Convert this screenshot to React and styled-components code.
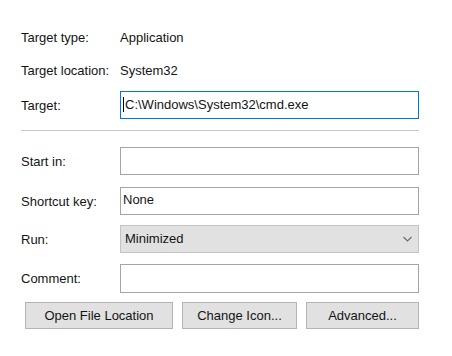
import React from "react";
import styled, { createGlobalStyle } from "styled-components";

const Global = createGlobalStyle`
  html, body { margin: 0; padding: 0; background: #ffffff; }
  body { font-family: "Liberation Sans", Arial, sans-serif; font-size: 13px; color: #141414; }
`;

const Page = styled.div`
  width: 452px;
  height: 356px;
  box-sizing: border-box;
  padding: 23px 0 0 21px;
  display: flex;
  flex-direction: column;
`;

const Row = styled.div`
  display: grid;
  grid-template-columns: 99px 299px;
  align-items: center;
  height: 28px;
  margin-top: ${(p) => p.$mt || 0}px;
`;

const Label = styled.div`
  line-height: 15px;
  white-space: nowrap;
`;

const Value = styled.div`
  line-height: 15px;
  white-space: nowrap;
`;

const Field = styled.div`
  box-sizing: border-box;
  height: ${(p) => p.$h || 28}px;
  border: 1px solid ${(p) => (p.$focus ? "#0078d7" : "#a5a5a5")};
  background: #ffffff;
  display: flex;
  align-items: ${(p) => (p.$top ? "flex-start" : "center")};
  padding: ${(p) => (p.$top ? "4px 2px 0 2px" : "0 2px 2px 2px")};
  line-height: 15px;
  white-space: nowrap;
`;

const Caret = styled.span`
  display: inline-block;
  width: 1px;
  height: 15px;
  background: #000;
  margin-right: 1px;
`;

const Separator = styled.div`
  width: 398px;
  height: 1px;
  background: #c8c8c8;
  margin-top: 11px;
`;

const Select = styled.div`
  box-sizing: border-box;
  height: 28px;
  border: 1px solid #c4c4c4;
  background: #e1e1e1;
  display: flex;
  align-items: center;
  justify-content: space-between;
  padding: 0 6px 1px 4px;
  line-height: 15px;
`;

const Buttons = styled.div`
  display: flex;
  gap: 9px;
  margin: 10px 0 0 4px;
`;

const Button = styled.div`
  box-sizing: border-box;
  width: ${(p) => p.$w}px;
  height: 27px;
  border: 1px solid #b4b4b4;
  background: #e1e1e1;
  display: flex;
  align-items: center;
  justify-content: center;
  line-height: 15px;
  padding-bottom: 1px;
  white-space: nowrap;
`;

const Chevron = () => (
  <svg width="9" height="6" viewBox="0 0 9 6">
    <polyline points="0.5,1 4.5,5 8.5,1" fill="none" stroke="#6b6b6b" strokeWidth="1.1" />
  </svg>
);

export default function App() {
  return (
    <>
      <Global />
      <Page>
        <Row>
          <Label>Target type:</Label>
          <Value>Application</Value>
        </Row>
        <Row $mt={5}>
          <Label>Target location:</Label>
          <Value>System32</Value>
        </Row>
        <Row $mt={7}>
          <Label>Target:</Label>
          <Field $focus>
            <Caret />
            C:\Windows\System32\cmd.exe
          </Field>
        </Row>
        <Separator />
        <Row $mt={16}>
          <Label>Start in:</Label>
          <Field />
        </Row>
        <Row $mt={12}>
          <Label>Shortcut key:</Label>
          <Field $top>None</Field>
        </Row>
        <Row $mt={10}>
          <Label>Run:</Label>
          <Select>
            <span>Minimized</span>
            <Chevron />
          </Select>
        </Row>
        <Row $mt={11}>
          <Label>Comment:</Label>
          <Field $h={29} />
        </Row>
        <Buttons>
          <Button $w={148}>Open File Location</Button>
          <Button $w={115}>Change Icon...</Button>
          <Button $w={113}>Advanced...</Button>
        </Buttons>
      </Page>
    </>
  );
}
